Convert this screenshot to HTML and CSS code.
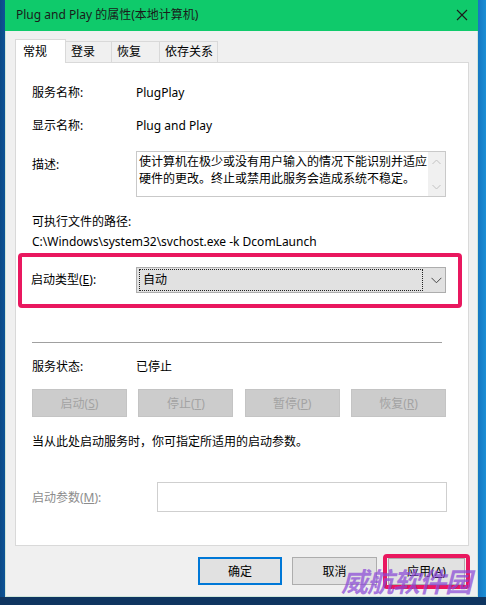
FILE: index.html
```html
<!DOCTYPE html>
<html>

<head>
    <title>Plug and Play 的属性(本地计算机)</title>
    <meta charset="utf-8">
    <meta name="viewport" content="width=device-width, initial-scale=1">
    <link rel="stylesheet" href="styles.css">
</head>

<body>
    <div class="desktop">
        <div class="window">
            <div class="titlebar">
                <span class="title">Plug and Play 的属性(本地计算机)</span>
                <svg class="close" width="12" height="12" viewBox="0 0 12 12">
                    <path d="M1 1 L11 11 M11 1 L1 11" stroke="#1b1b1b" stroke-width="1.1" fill="none"/>
                </svg>
            </div>
            <ul class="tabs">
                <li class="tab active">常规</li>
                <li class="tab tab-login">登录</li>
                <li class="tab tab-recover">恢复</li>
                <li class="tab tab-deps">依存关系</li>
            </ul>
            <div class="panel">
                <div class="row row-first">
                    <span class="label">服务名称:</span>
                    <span class="value">PlugPlay</span>
                </div>
                <div class="row row-second">
                    <span class="label">显示名称:</span>
                    <span class="value">Plug and Play</span>
                </div>
                <div class="row-desc">
                    <span class="label desc-label">描述:</span>
                    <div class="desc-box">
                        <div class="desc-text">使计算机在极少或没有用户输入的情况下能识别并适应硬件的更改。终止或禁用此服务会造成系统不稳定。</div>
                        <div class="scrollbar">
                            <svg width="9" height="6" viewBox="0 0 9 6"><path d="M0.5 5 L4.5 1 L8.5 5" stroke="#c2c2c2" fill="none"/></svg>
                            <svg width="9" height="6" viewBox="0 0 9 6"><path d="M0.5 1 L4.5 5 L8.5 1" stroke="#c2c2c2" fill="none"/></svg>
                        </div>
                    </div>
                </div>
                <div class="path-label">可执行文件的路径:</div>
                <div class="path-text">C:\Windows\system32\svchost.exe -k DcomLaunch</div>
                <div class="mark startup">
                    <span class="label startup-label">启动类型(<u>E</u>):</span>
                    <div class="select">
                        <div class="select-focus">自动</div>
                        <svg class="chevron" width="11" height="7" viewBox="0 0 11 7"><path d="M0.5 0.8 L5.5 5.8 L10.5 0.8" stroke="#444" fill="none"/></svg>
                    </div>
                </div>
                <div class="divider"></div>
                <div class="row row-status">
                    <span class="label">服务状态:</span>
                    <span class="value">已停止</span>
                </div>
                <div class="actions">
                    <button class="btn-disabled">启动(<u>S</u>)</button>
                    <button class="btn-disabled">停止(<u>T</u>)</button>
                    <button class="btn-disabled">暂停(<u>P</u>)</button>
                    <button class="btn-disabled">恢复(<u>R</u>)</button>
                </div>
                <div class="hint">当从此处启动服务时，你可指定所适用的启动参数。</div>
                <div class="params">
                    <span class="params-label">启动参数(<u>M</u>):</span>
                    <div class="params-input"></div>
                </div>
            </div>
            <div class="footer">
                <button class="btn btn-default">确定</button>
                <button class="btn">取消</button>
                <div class="mark apply-mark">
                    <button class="btn btn-apply">应用(<u>A</u>)</button>
                </div>
            </div>
        </div>
        <div class="watermark">威航软件园</div>
    </div>
</body>

</html>
```

FILE: styles.css
```css
body,
html {
    margin: 0;
    padding: 0;
    font-family: "Noto Sans", "Noto Sans CJK SC", sans-serif;
    font-size: 12px;
    color: #000;
}

.desktop {
    width: 486px;
    height: 605px;
    overflow: hidden;
    position: relative;
    background:
        linear-gradient(180deg, rgba(0, 0, 0, 0) 0, rgba(0, 0, 0, 0) 597px, #0f3560 597px),
        linear-gradient(90deg, #0b4a86 0, #0d5396 5px, #1577c2 478px, #1c8fd6 486px);
}

.window {
    margin-left: 5px;
    width: 473px;
    height: 597px;
    box-sizing: border-box;
    background-color: #f0f0f0;
    border: 1px solid #cfe6da;
    border-top: none;
    padding: 0 8px 0 9px;
    display: flex;
    flex-direction: column;
}

.titlebar {
    margin: 0 -9px 0 -10px;
    height: 31px;
    background-color: #0fca6b;
    display: flex;
    align-items: center;
    justify-content: space-between;
    padding: 0 10px 0 11px;
}

.title {
    font-size: 12px;
    line-height: 16px;
    color: #1a1a1a;
}

.tabs {
    list-style-type: none;
    margin: 0;
    padding: 0;
    height: 31px;
    display: flex;
    align-items: flex-end;
}

.tab {
    height: 21px;
    box-sizing: border-box;
    border: 1px solid #d9d9d9;
    border-bottom: none;
    border-left: none;
    background-color: #f0f0f0;
    padding-left: 5px;
    line-height: 20px;
    font-size: 12px;
}

.tab.active {
    width: 51px;
    height: 24px;
    background-color: #fff;
    border-left: 1px solid #d9d9d9;
    padding-left: 7px;
    line-height: 24px;
    margin-bottom: -1px;
    position: relative;
    z-index: 1;
}

.tab-login {
    width: 46px;
}

.tab-recover {
    width: 48px;
}

.tab-deps {
    width: 58px;
}

.panel {
    height: 486px;
    box-sizing: border-box;
    background-color: #fff;
    border: 1px solid #d9d9d9;
    padding-left: 16px;
    display: flex;
    flex-direction: column;
}

.row {
    display: flex;
    align-items: center;
    height: 20px;
    line-height: 20px;
}

.row-first {
    margin-top: 20px;
}

.row-second {
    margin-top: 13px;
}

.label {
    width: 104px;
    flex-shrink: 0;
}

.row-desc {
    display: flex;
    margin-top: 15px;
}

.desc-label {
    margin-top: 5px;
    line-height: 18px;
}

.desc-box {
    width: 310px;
    height: 46px;
    box-sizing: border-box;
    border: 1px solid #c9c9c9;
    display: flex;
}

.desc-text {
    flex: 1;
    padding: 1px 0 0 2px;
    line-height: 17px;
    font-size: 12px;
}

.scrollbar {
    width: 17px;
    background-color: #f0f0f0;
    display: flex;
    flex-direction: column;
    justify-content: space-between;
    align-items: center;
    padding: 7px 0 6px;
    box-sizing: border-box;
}

.path-label {
    margin-top: 16px;
    line-height: 18px;
}

.path-text {
    margin-top: 2px;
    line-height: 18px;
}

.mark {
    border: 4px solid #e9185f;
    border-radius: 4px;
    box-sizing: border-box;
}

.startup {
    margin: 2px 0 0 -14px;
    width: 444px;
    height: 55px;
    display: flex;
    align-items: center;
    padding-left: 9px;
}

.startup-label {
    width: 105px;
    line-height: 18px;
}

.select {
    width: 310px;
    height: 26px;
    box-sizing: border-box;
    background-color: #e1e1e1;
    border: 1px solid #adadad;
    display: flex;
    align-items: center;
    padding: 0 3px 0 2px;
}

.select-focus {
    width: 288px;
    height: 22px;
    box-sizing: border-box;
    border: 1px dotted #222;
    line-height: 20px;
    padding-left: 3px;
}

.chevron {
    margin-left: 8px;
}

.divider {
    margin-top: 34px;
    width: 410px;
    height: 1px;
    background-color: #a0a0a0;
}

.row-status {
    margin-top: 14px;
}

.actions {
    margin-top: 12px;
    width: 414px;
    display: flex;
    justify-content: space-between;
}

.btn-disabled {
    width: 95px;
    height: 28px;
    background-color: #cccccc;
    border: 1px solid #c4c4c4;
    color: #a3a3a3;
    font-family: inherit;
    font-size: 12px;
    padding: 0;
}

.hint {
    margin-top: 16px;
    line-height: 18px;
}

.params {
    margin-top: 31px;
    display: flex;
    align-items: center;
}

.params-label {
    width: 125px;
    color: #8c8c8c;
}

.params-input {
    width: 290px;
    height: 30px;
    box-sizing: border-box;
    border: 1px solid #cfcfcf;
}

.footer {
    display: flex;
    justify-content: flex-end;
    align-items: center;
    height: 50px;
    margin-right: -1px;
}

.btn {
    width: 85px;
    height: 28px;
    background-color: #e1e1e1;
    border: 1px solid #adadad;
    font-family: inherit;
    font-size: 12px;
    color: #000;
    padding: 0;
    margin-left: 10px;
}

.btn-default {
    width: 84px;
    border: 2px solid #0078d7;
}

.apply-mark {
    width: 87px;
    height: 35px;
    margin-left: 6px;
    display: flex;
    align-items: center;
    justify-content: center;
}

.btn-apply {
    width: 77px;
    height: 27px;
    margin: 0;
}

.watermark {
    position: absolute;
    left: 341px;
    top: 567px;
    font-size: 27px;
    font-weight: bold;
    font-style: italic;
    letter-spacing: -1px;
    line-height: 30px;
    color: rgba(138, 72, 214, 0.72);
}
```
